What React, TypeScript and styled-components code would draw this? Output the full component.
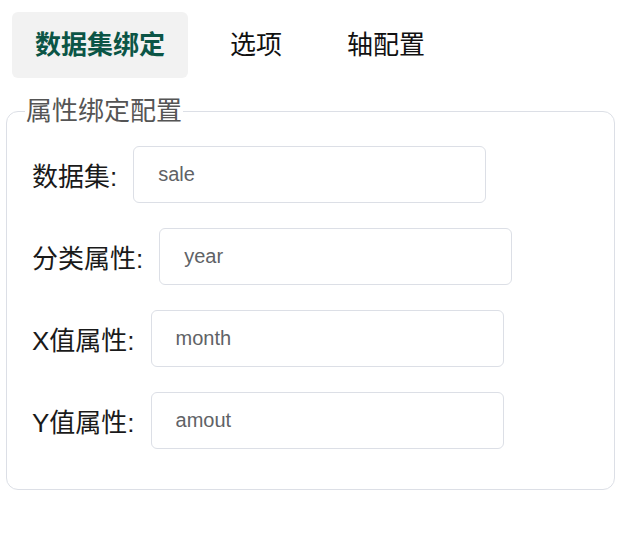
import React from "react";
import styled, { createGlobalStyle } from "styled-components";

const GlobalStyle = createGlobalStyle`
  html, body {
    margin: 0;
    padding: 0;
    background: #fff;
  }
  body {
    font-family: "Liberation Sans", "Noto Sans CJK SC", sans-serif;
  }
`;

const Page = styled.div`
  padding: 6px;
  width: 629px;
  box-sizing: border-box;
`;

const TabBar = styled.div`
  display: flex;
  gap: 19px;
  padding: 6px 0 0 6px;
`;

const Tab = styled.div<{ $active?: boolean }>`
  height: 66px;
  line-height: 66px;
  padding: 0 23px;
  border-radius: 6px;
  font-size: 26px;
  font-weight: ${(p) => (p.$active ? "bold" : "normal")};
  color: ${(p) => (p.$active ? "#0b5546" : "#111")};
  background: ${(p) => (p.$active ? "#f2f2f2" : "transparent")};
  cursor: pointer;
`;

const FieldSet = styled.fieldset`
  margin: 18px 8px 0 0;
  padding: 20px 25px 40px 25px;
  border: 1px solid #dcdfe6;
  border-radius: 12px;
  min-width: 0;
`;

const Legend = styled.legend`
  margin-left: -7px;
  padding: 0 1px;
  font-size: 26px;
  line-height: 30px;
  color: #555;
`;

const Rows = styled.div`
  display: flex;
  flex-direction: column;
  gap: 25px;
`;

const Row = styled.div`
  display: flex;
  align-items: center;
`;

const Label = styled.label`
  font-size: 26px;
  color: #1a1a1a;
  margin-right: 16px;
  white-space: nowrap;
`;

const Input = styled.input`
  box-sizing: border-box;
  width: 353px;
  height: 57px;
  padding: 0 24px;
  border: 1px solid #dcdfe6;
  border-radius: 6px;
  font-family: "Liberation Sans", "Noto Sans CJK SC", sans-serif;
  font-size: 20px;
  color: #606266;
  outline: none;
`;

const tabs = ["数据集绑定", "选项", "轴配置"];

const fields = [
  { label: "数据集:", value: "sale" },
  { label: "分类属性:", value: "year" },
  { label: "X值属性:", value: "month" },
  { label: "Y值属性:", value: "amout" },
];

const App = () => {
  return (
    <>
      <GlobalStyle />
      <Page>
        <TabBar>
          {tabs.map((t, i) => (
            <Tab key={t} $active={i === 0}>
              {t}
            </Tab>
          ))}
        </TabBar>
        <FieldSet>
          <Legend>属性绑定配置</Legend>
          <Rows>
            {fields.map((f) => (
              <Row key={f.label}>
                <Label>{f.label}</Label>
                <Input readOnly defaultValue={f.value} />
              </Row>
            ))}
          </Rows>
        </FieldSet>
      </Page>
    </>
  );
};

export default App;
